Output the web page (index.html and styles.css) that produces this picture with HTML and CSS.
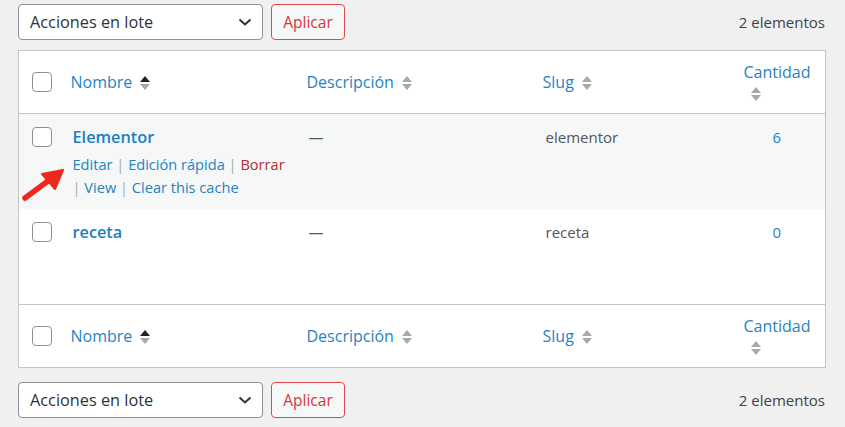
FILE: index.html
```html
<!DOCTYPE html>
<html lang="es">
<head>
<meta charset="utf-8">
<link rel="stylesheet" href="styles.css">
</head>
<body>
<div class="nav top">
  <div class="select"><span>Acciones en lote</span><svg class="chev" width="14" height="8" viewBox="0 0 14 8"><path d="M1.5 1.5 L7 6.5 L12.5 1.5" fill="none" stroke="#2c3338" stroke-width="2"/></svg></div>
  <button class="apply">Aplicar</button>
  <div class="count">2 elementos</div>
</div>
<table class="list">
  <colgroup><col class="c-cb"><col class="c-name"><col class="c-desc"><col class="c-slug"><col class="c-num"></colgroup>
  <thead>
    <tr class="head">
      <td class="cb"><span class="box"></span></td>
      <th class="name-h"><a>Nombre</a><span class="sort asc"><i class="up"></i><i class="dn"></i></span></th>
      <th><a>Descripción</a><span class="sort"><i class="up"></i><i class="dn"></i></span></th>
      <th><a>Slug</a><span class="sort"><i class="up"></i><i class="dn"></i></span></th>
      <th class="num"><a>Cantidad</a><span class="sort block"><i class="up"></i><i class="dn"></i></span></th>
    </tr>
  </thead>
  <tbody>
    <tr class="row alt">
      <td class="cb"><span class="box"></span></td>
      <td class="name"><a class="title">Elementor</a>
        <div class="actions"><div class="line"><a>Editar</a> <span class="sep">|</span> <a>Edición rápida</a> <span class="sep">|</span> <a class="del">Borrar</a></div><div class="line"><span class="sep">|</span> <a>View</a> <span class="sep">|</span> <a>Clear this cache</a></div></div>
        <svg class="arrow" width="44" height="34" viewBox="0 0 44 34"><path d="M4 30 L27 13" stroke="#f0271d" stroke-width="5.5" stroke-linecap="round"/><path d="M42 2 L21 6 L34 21 Z" fill="#f0271d" stroke="#f0271d" stroke-width="2" stroke-linejoin="round"/></svg>
      </td>
      <td class="desc">—</td>
      <td class="slug">elementor</td>
      <td class="num"><a>6</a></td>
    </tr>
    <tr class="row r2">
      <td class="cb"><span class="box"></span></td>
      <td class="name"><a class="title">receta</a></td>
      <td class="desc">—</td>
      <td class="slug">receta</td>
      <td class="num"><a>0</a></td>
    </tr>
  </tbody>
  <tfoot>
    <tr class="head foot">
      <td class="cb"><span class="box"></span></td>
      <th class="name-h"><a>Nombre</a><span class="sort asc"><i class="up"></i><i class="dn"></i></span></th>
      <th><a>Descripción</a><span class="sort"><i class="up"></i><i class="dn"></i></span></th>
      <th><a>Slug</a><span class="sort"><i class="up"></i><i class="dn"></i></span></th>
      <th class="num"><a>Cantidad</a><span class="sort block"><i class="up"></i><i class="dn"></i></span></th>
    </tr>
  </tfoot>
</table>
<div class="nav bottom">
  <div class="select"><span>Acciones en lote</span><svg class="chev" width="14" height="8" viewBox="0 0 14 8"><path d="M1.5 1.5 L7 6.5 L12.5 1.5" fill="none" stroke="#2c3338" stroke-width="2"/></svg></div>
  <button class="apply">Aplicar</button>
  <div class="count">2 elementos</div>
</div>
</body>
</html>
```
FILE: styles.css
```css
html, body { margin: 0; padding: 0; }
body {
  background: #f0f0f1;
  font-family: "Open Sans", "Noto Sans", sans-serif;
  color: #3c434a;
  padding: 4px 20px 0 18px;
  width: 807px;
}
.nav { display: flex; align-items: center; height: 36px; }
.nav.bottom { margin-top: 14px; }
.select {
  box-sizing: border-box;
  width: 245px; height: 36px;
  border: 1px solid #8c8f94; border-radius: 4px;
  background: #fff;
  display: flex; align-items: center; justify-content: space-between;
  padding: 0 10px 0 11px;
  font-size: 16.3px; color: #2c3338;
}
.apply {
  box-sizing: border-box;
  margin-left: 8px;
  width: 74px; height: 36px;
  border: 1px solid #e0484a; border-radius: 4px;
  background: #f6f7f7;
  color: #d63638;
  font-family: inherit; font-size: 15.5px;
  padding: 0;
}
.count { margin-left: auto; font-size: 15px; color: #3c434a; }
.list {
  margin-top: 10px;
  width: 807px;
  border-collapse: collapse;
  table-layout: fixed;
  background: #fff;
  border: 1px solid #c3c4c7;
}
.c-cb { width: 42px; }
.c-name { width: 236px; }
.c-desc { width: 236px; }
.c-slug { width: 196px; }
.c-num { width: 97px; }
a { color: #1f83c2; text-decoration: none; }
th, td { padding: 0 10px; text-align: left; font-weight: normal; }
.head th, .head td { height: 62px; vertical-align: middle; font-size: 16px; }
.head { border-bottom: 1px solid #c3c4c7; }
.foot { border-bottom: 0; border-top: 1px solid #c3c4c7; }
.cb { padding: 0 0 0 13px; }
.box {
  display: block; box-sizing: border-box;
  width: 20px; height: 20px;
  border: 1px solid #8c8f94; border-radius: 4px; background: #fff;
}
.name-h { padding-left: 10px; }
.sort { display: inline-flex; flex-direction: column; gap: 2px; margin-left: 8px; vertical-align: middle; position: relative; top: -1px; }
.sort i { display: block; width: 0; height: 0; border-left: 5px solid transparent; border-right: 5px solid transparent; }
.sort .up { border-bottom: 6px solid #a7aaad; }
.sort .dn { border-top: 6px solid #a7aaad; }
.sort.asc .up { border-bottom-color: #1d2327; }
.sort.block { display: flex; margin: 5px 0 0 7px; }
th.num { text-align: left; padding-left: 15px; line-height: 21px; }
.row td { vertical-align: top; height: 95px; box-sizing: border-box; padding-top: 13px; font-size: 15px; }
.row.r2 td { height: 96px; }
.row .cb { padding-top: 13px; }
.row.alt { background: #f6f7f7; }
.name { position: relative; padding-left: 12px; }
.title { font-weight: 600; font-size: 16.3px; color: #1c7fbe; line-height: 20px; }
.actions { margin-top: 6px; font-size: 14.6px; line-height: 23px; }
.line { white-space: nowrap; }
.sep { color: #a7aaad; }
.del { color: #b32d2e; }
.desc { padding-left: 12px; color: #50575e; line-height: 20px; }
.slug { padding-left: 13px; color: #50575e; line-height: 20px; }
td.num { text-align: center; line-height: 20px; }
.arrow { position: absolute; left: -40px; top: 54px; }
```
